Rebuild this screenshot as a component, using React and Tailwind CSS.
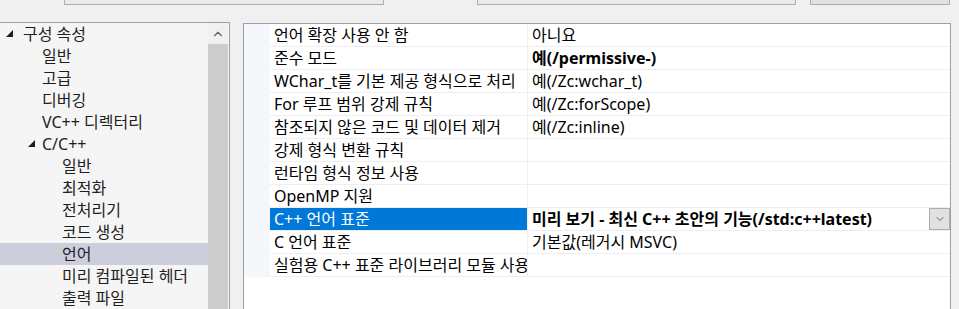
import { ChevronDown, ChevronUp } from 'lucide-react';

const font = { fontFamily: '"Noto Sans", "Noto Sans CJK KR", sans-serif' };

const tree = [
  { label: '구성 속성', level: 0, open: true },
  { label: '일반', level: 1 },
  { label: '고급', level: 1 },
  { label: '디버깅', level: 1 },
  { label: 'VC++ 디렉터리', level: 1 },
  { label: 'C/C++', level: 1, open: true },
  { label: '일반', level: 2 },
  { label: '최적화', level: 2 },
  { label: '전처리기', level: 2 },
  { label: '코드 생성', level: 2 },
  { label: '언어', level: 2, selected: true },
  { label: '미리 컴파일된 헤더', level: 2 },
  { label: '출력 파일', level: 2 },
];

const rows = [
  { name: '언어 확장 사용 안 함', value: '아니요' },
  { name: '준수 모드', value: '예(/permissive-)', bold: true },
  { name: 'WChar_t를 기본 제공 형식으로 처리', value: '예(/Zc:wchar_t)' },
  { name: 'For 루프 범위 강제 규칙', value: '예(/Zc:forScope)' },
  { name: '참조되지 않은 코드 및 데이터 제거', value: '예(/Zc:inline)' },
  { name: '강제 형식 변환 규칙', value: '' },
  { name: '런타임 형식 정보 사용', value: '' },
  { name: 'OpenMP 지원', value: '' },
  { name: 'C++ 언어 표준', value: '미리 보기 - 최신 C++ 초안의 기능(/std:c++latest)', bold: true, selected: true },
  { name: 'C 언어 표준', value: '기본값(레거시 MSVC)' },
  { name: '실험용 C++ 표준 라이브러리 모듈 사용', value: '' },
];

const indent = ['pl-[23px]', 'pl-[42px]', 'pl-[62px]'];
const arrowPos = ['left-[6px]', 'left-[28px]', 'left-[48px]'];

function TreeItem({ item }) {
  return (
    <div className={`relative h-[22px] flex items-center whitespace-nowrap text-[16px] text-[#1e1e1e] ${indent[item.level]} ${item.selected ? 'bg-[#cccedb]' : ''}`}>
      {item.open && (
        <svg className={`absolute top-[7px] ${arrowPos[item.level]}`} width="8" height="8" viewBox="0 0 8 8">
          <path d="M7 0 L7 7 L0 7 Z" fill="#1e1e1e" />
        </svg>
      )}
      {item.label}
    </div>
  );
}

function GridRow({ row }) {
  return (
    <div className="flex h-[23px] text-[16px] text-black">
      <div className="w-[26px] shrink-0 bg-[#f4f7fc]" />
      <div className={`w-[258px] shrink-0 border-r border-b border-[#edeef2] flex items-center pl-[4px] overflow-hidden whitespace-nowrap ${row.selected ? 'bg-[#0078d7] text-white' : ''}`}>
        {row.name}
      </div>
      <div className={`flex-1 border-b border-[#edeef2] flex items-center pl-[4px] whitespace-nowrap ${row.bold ? 'font-bold' : ''}`}>
        <span className="flex-1">{row.value}</span>
        {row.selected && (
          <div className="w-[21px] h-[22px] border border-[#adadad] bg-[#e1e1e1] flex items-center justify-center self-start">
            <ChevronDown size={12} strokeWidth={1.5} color="#444" />
          </div>
        )}
      </div>
    </div>
  );
}

export default function App() {
  return (
    <div className="w-[959px] h-[309px] bg-[#f0f0f0] overflow-hidden" style={font}>
      {/* top buttons, mostly cut off */}
      <div className="h-[22px] flex items-start">
        <div className="ml-[64px] w-[320px] h-[5px] border-x border-b border-[#adadad] bg-[#eaeaea]" />
        <div className="ml-[93px] w-[319px] h-[5px] border-x border-b border-[#adadad] bg-[#eaeaea]" />
        <div className="ml-[14px] w-[140px] h-[5px] border-x border-b border-[#adadad] bg-[#e1e1e1]" />
      </div>

      <div className="flex items-start">
        {/* property tree */}
        <div className="w-[230px] h-[287px] border-t border-r border-[#a0a0a0] bg-[#f5f5f5] flex">
          <div className="w-[208px]">
            {tree.map((item, i) => (
              <TreeItem key={i} item={item} />
            ))}
          </div>
          <div className="w-[20px] flex flex-col bg-[#f0f0f0]">
            <div className="h-[21px] flex items-center justify-center">
              <ChevronUp size={14} strokeWidth={2} color="#606060" />
            </div>
            <div className="flex-1 bg-[#cdcdcd]" />
          </div>
        </div>

        {/* property grid */}
        <div className="ml-[13px] mt-[1px] w-[708px] h-[286px] border-t border-x border-[#a0a0a0] bg-white">
          {rows.map((row, i) => (
            <GridRow key={i} row={row} />
          ))}
        </div>
      </div>
    </div>
  );
}
